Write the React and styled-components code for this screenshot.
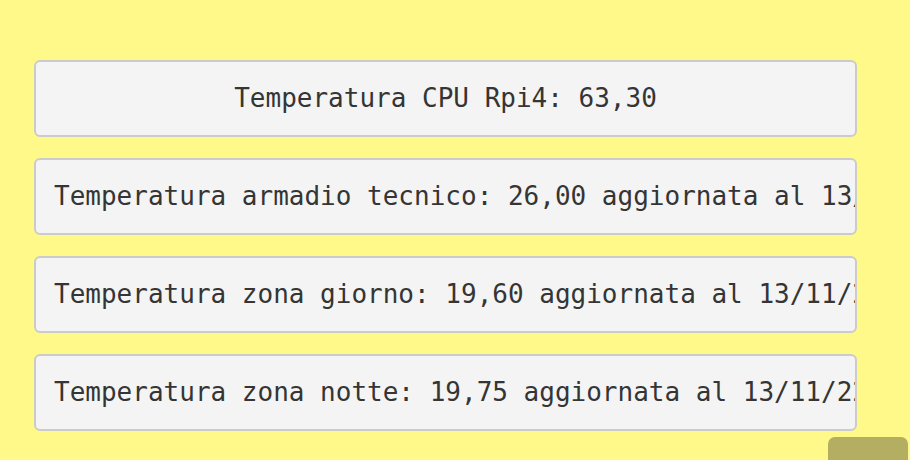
import React from 'react';
import styled, { createGlobalStyle } from 'styled-components';

const GlobalStyle = createGlobalStyle`
  html, body {
    margin: 0;
    padding: 0;
    background: #fff98a;
    overflow: hidden;
  }
`;

const Page = styled.div`
  display: flex;
  flex-direction: column;
  gap: 21px;
  padding: 60px 53px 0 34px;
`;

const Card = styled.div`
  background: #f4f4f4;
  border: 2px solid #cbcbcb;
  border-radius: 6px;
  padding: 22px 18px 22px 18px;
  font-family: "DejaVu Sans Mono", monospace;
  font-size: 26px;
  line-height: 29px;
  color: #353535;
  white-space: nowrap;
  overflow: hidden;
  text-align: ${(p) => (p.$center ? 'center' : 'left')};
`;

const TopButton = styled.div`
  position: fixed;
  left: 828px;
  top: 437px;
  width: 80px;
  height: 60px;
  border-radius: 7px;
  background: #b3ae62;
`;

const rows = [
  'Temperatura armadio tecnico: 26,00 aggiornata al 13/11/22 10:30',
  'Temperatura zona giorno: 19,60 aggiornata al 13/11/22 10:30',
  'Temperatura zona notte: 19,75 aggiornata al 13/11/22 10:30',
];

export default function App() {
  return (
    <>
      <GlobalStyle />
      <Page>
        <Card $center>Temperatura CPU Rpi4: 63,30</Card>
        {rows.map((r) => (
          <Card key={r}>{r}</Card>
        ))}
      </Page>
      <TopButton />
    </>
  );
}
